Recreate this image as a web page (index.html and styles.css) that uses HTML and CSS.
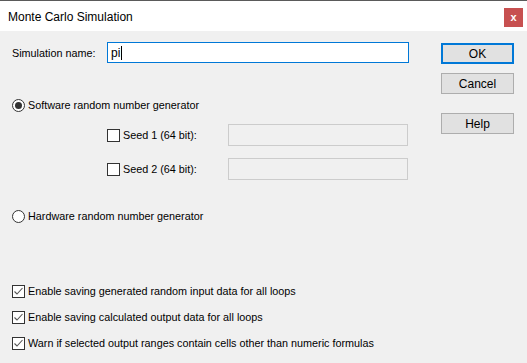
FILE: index.html
```html
<!doctype html>
<html lang="en">
<head>
  <meta charset="utf-8">
  <link rel="stylesheet" href="styles.css">
</head>
<body>

  <div class="window">
    <div class="titlebar">
      <div class="title">Monte Carlo Simulation</div>
      <div class="close">x</div>
    </div>

    <div class="content">
      <div class="left">
        <div class="name-row">
          <div class="name-label">Simulation name:</div>
          <div class="textbox">pi<span class="caret"></span></div>
        </div>

        <div class="option radio-software">
          <span class="radio checked"></span>
          <span>Software random number generator</span>
        </div>

        <div class="seed-row first">
          <div class="seed-label">
            <span class="check"></span>
            <span>Seed 1 (64 bit):</span>
          </div>
          <div class="seed-box"></div>
        </div>
        <div class="seed-row">
          <div class="seed-label">
            <span class="check"></span>
            <span>Seed 2 (64 bit):</span>
          </div>
          <div class="seed-box"></div>
        </div>

        <div class="option radio-hardware">
          <span class="radio"></span>
          <span>Hardware random number generator</span>
        </div>

        <div class="checks">
          <div class="option">
            <span class="check"><svg width="11" height="11" viewBox="0 0 11 11"><path d="M1.5 5.5 L4 8 L9.5 2" fill="none" stroke="#555" stroke-width="1.1"/></svg></span>
            <span>Enable saving generated random input data for all loops</span>
          </div>
          <div class="option">
            <span class="check"><svg width="11" height="11" viewBox="0 0 11 11"><path d="M1.5 5.5 L4 8 L9.5 2" fill="none" stroke="#555" stroke-width="1.1"/></svg></span>
            <span>Enable saving calculated output data for all loops</span>
          </div>
          <div class="option">
            <span class="check"><svg width="11" height="11" viewBox="0 0 11 11"><path d="M1.5 5.5 L4 8 L9.5 2" fill="none" stroke="#555" stroke-width="1.1"/></svg></span>
            <span>Warn if selected output ranges contain cells other than numeric formulas</span>
          </div>
        </div>
      </div>

      <div class="buttons">
        <div class="button default">OK</div>
        <div class="button cancel">Cancel</div>
        <div class="button help">Help</div>
      </div>
    </div>
  </div>

</body>
</html>
```

FILE: styles.css
```css
html, body {
  margin: 0;
  padding: 0;
  background-color: #f0f0f0;
  font-family: "Liberation Sans", Arial, sans-serif;
  font-size: 10.8px;
  color: #000;
}

.window {
  width: 527px;
  height: 363px;
  overflow: hidden;
}

.titlebar {
  height: 30px;
  border-top: 1px solid #5a5a5a;
  background-color: #fff;
  display: flex;
  align-items: center;
  justify-content: space-between;
  padding-left: 8px;
}

.title {
  font-size: 12px;
  margin-top: 1px;
}

.close {
  width: 19px;
  height: 19px;
  margin-right: 4px;
  margin-top: 2px;
  background-color: #c75050;
  color: #fff;
  font-weight: bold;
  font-size: 11px;
  display: flex;
  align-items: center;
  justify-content: center;
  line-height: 1;
}

.content {
  display: flex;
  padding-left: 12px;
}

.left {
  width: 397px;
}

.name-row {
  display: flex;
  align-items: center;
  margin-top: 11px;
  height: 21px;
}

.name-label {
  width: 95px;
}

.textbox {
  flex: 1;
  height: 19px;
  border: 1px solid #0078d7;
  background-color: #fff;
  display: flex;
  align-items: center;
  padding-left: 3px;
  font-size: 12px;
}

.caret {
  display: inline-block;
  width: 1px;
  height: 14px;
  background-color: #000;
  margin-left: 1px;
}

.option {
  display: flex;
  align-items: center;
  height: 13px;
  line-height: 13px;
}

.radio-software {
  margin-top: 36px;
}

.radio-hardware {
  margin-top: 30px;
}

.radio {
  box-sizing: border-box;
  width: 13px;
  height: 13px;
  border: 1px solid #333;
  border-radius: 50%;
  background-color: #fff;
  margin-right: 3px;
  display: flex;
  align-items: center;
  justify-content: center;
}

.radio.checked:after {
  content: "";
  width: 7px;
  height: 7px;
  border-radius: 50%;
  background-color: #333;
}

.check {
  box-sizing: border-box;
  width: 13px;
  height: 13px;
  border: 1px solid #333;
  background-color: #fff;
  margin-right: 3px;
  display: inline-flex;
  align-items: center;
  justify-content: center;
}

.seed-row {
  display: flex;
  align-items: center;
  height: 22px;
  margin-top: 12px;
  padding-left: 95px;
}

.seed-label {
  width: 121px;
  display: flex;
  align-items: center;
}

.seed-box {
  box-sizing: border-box;
  width: 180px;
  height: 22px;
  border: 1px solid #ccc;
  background-color: #f0f0f0;
}

.checks {
  margin-top: 62px;
  display: flex;
  flex-direction: column;
  gap: 13px;
}

.buttons {
  margin-left: 32px;
  width: 73px;
  display: flex;
  flex-direction: column;
}

.button {
  box-sizing: border-box;
  height: 21px;
  border: 1px solid #adadad;
  background-color: #e1e1e1;
  display: flex;
  align-items: center;
  justify-content: center;
  font-size: 12px;
}

.button.default {
  margin-top: 12px;
  border: 2px solid #0078d7;
}

.button.cancel {
  margin-top: 9px;
}

.button.help {
  margin-top: 19px;
}
```
